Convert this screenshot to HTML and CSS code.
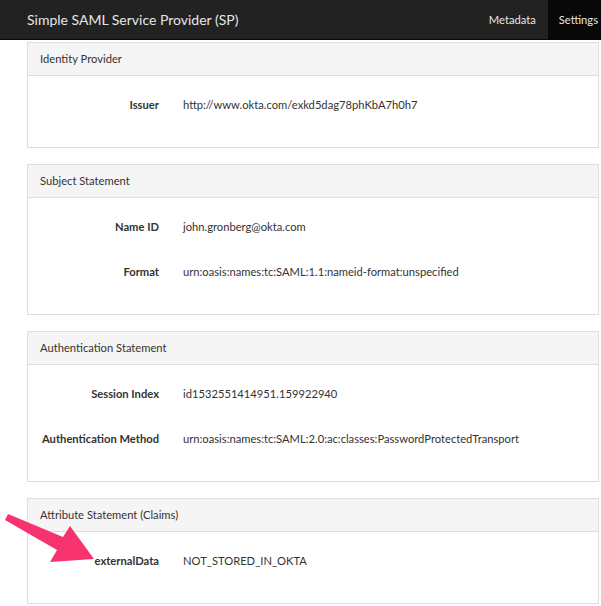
FILE: index.html
```html
<!DOCTYPE html>
<html>
<head>
<meta charset="utf-8">
<link rel="stylesheet" href="styles.css">
</head>
<body>
<nav class="navbar">
  <div class="brand">Simple SAML Service Provider (SP)</div>
  <div class="nav-links">
    <a class="nav-link">Metadata</a>
    <a class="nav-link active">Settings</a>
  </div>
</nav>
<main class="content">
  <section class="panel">
    <div class="panel-heading">Identity Provider</div>
    <div class="panel-body">
      <div class="row"><div class="label">Issuer</div><div class="value">http://www.okta.com/exkd5dag78phKbA7h0h7</div></div>
    </div>
  </section>
  <section class="panel">
    <div class="panel-heading">Subject Statement</div>
    <div class="panel-body">
      <div class="row"><div class="label">Name ID</div><div class="value">john.gronberg@okta.com</div></div>
      <div class="row"><div class="label">Format</div><div class="value">urn:oasis:names:tc:SAML:1.1:nameid-format:unspecified</div></div>
    </div>
  </section>
  <section class="panel">
    <div class="panel-heading">Authentication Statement</div>
    <div class="panel-body">
      <div class="row"><div class="label">Session Index</div><div class="value">id1532551414951.159922940</div></div>
      <div class="row"><div class="label">Authentication Method</div><div class="value">urn:oasis:names:tc:SAML:2.0:ac:classes:PasswordProtectedTransport</div></div>
    </div>
  </section>
  <section class="panel">
    <div class="panel-heading">Attribute Statement (Claims)</div>
    <div class="panel-body">
      <div class="row"><div class="label">externalData</div><div class="value">NOT_STORED_IN_OKTA</div></div>
    </div>
  </section>
</main>
<svg class="arrow" width="100" height="70" viewBox="0 500 100 70">
  <polygon points="8,514 63,537 70,526 94,559 50,562 57,550 5,520" fill="#f7336f"/>
</svg>
</body>
</html>
```
FILE: styles.css
```css
* { box-sizing: border-box; }
html, body { margin: 0; padding: 0; background: #fff; }
body {
  font-family: Lato, "Open Sans", sans-serif;
  color: #333;
  width: 601px;
  height: 606px;
  overflow: hidden;
  position: relative;
}
.navbar {
  height: 40px;
  background: #222;
  border-bottom: 1px solid #090909;
  display: flex;
  justify-content: space-between;
  align-items: stretch;
}
.brand {
  padding-left: 27px;
  color: #e6e6e6;
  font-size: 14px;
  line-height: 40px;
}
.nav-links { display: flex; }
.nav-link {
  color: #e6e6e6;
  font-size: 11.2px;
  line-height: 40px;
  padding: 0 12px 0 0;
}
.nav-link.active {
  background: #080808;
  padding: 0 3px 0 11px;
}
.content {
  padding: 2px 2px 0 27px;
}
.panel {
  border: 1px solid #ddd;
  margin-bottom: 16px;
  background: #fff;
}
.panel-heading {
  height: 33px;
  background: #f5f5f5;
  border-bottom: 1px solid #ddd;
  padding-left: 12px;
  font-size: 11.2px;
  line-height: 32px;
}
.panel-body {
  padding: 6px 0 20px;
}
.row {
  display: flex;
  height: 45px;
  align-items: center;
  font-size: 11.2px;
}
.label {
  width: 131px;
  text-align: right;
  font-weight: bold;
  flex: none;
}
.value {
  padding-left: 24px;
}
.arrow {
  position: absolute;
  left: 0;
  top: 500px;
}
```
